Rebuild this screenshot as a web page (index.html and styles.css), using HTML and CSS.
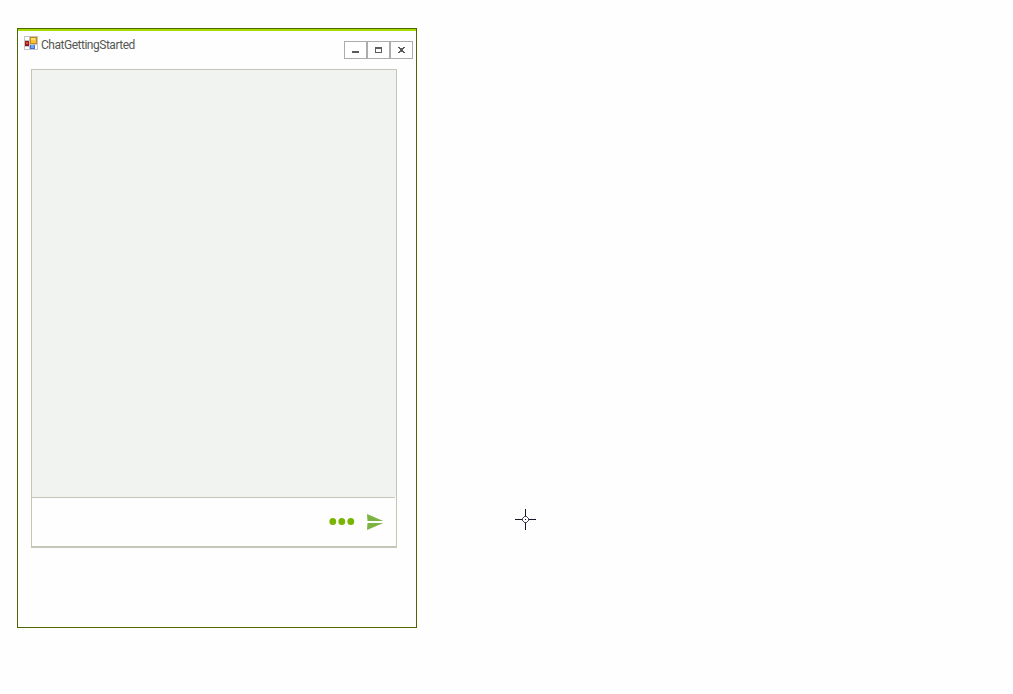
FILE: index.html
```html
<!DOCTYPE html>
<html lang="en">
<head>
<meta charset="utf-8">
<title>ChatGettingStarted</title>
<link rel="stylesheet" href="styles.css">
</head>
<body>
<main class="window">
  <header class="titlebar">
    <svg class="app-icon" width="14" height="14" viewBox="0 0 14 14" shape-rendering="crispEdges">
      <path d="M0 0h14v14H0z" fill="#c3c3c8"/>
      <path d="M1 1h4v3H1zM1 11h4v2H1zM6 1h7v7H6zM6 9h7v4H6z" fill="#fff"/>
      <rect x="1" y="5" width="4" height="5" fill="#a31616"/>
      <rect x="2" y="6" width="2" height="2" fill="#d8503f"/>
      <rect x="6" y="1" width="7" height="7" fill="#c28b12"/>
      <rect x="7" y="2" width="5" height="5" fill="#f8c53a"/>
      <rect x="7" y="2" width="4" height="2" fill="#ffe07c"/>
      <rect x="6" y="9" width="5" height="4" fill="#3f72d2"/>
      <rect x="7" y="9" width="3" height="3" fill="#72a5f5"/>
    </svg>
    <h1 class="title">ChatGettingStarted</h1>
    <div class="controls">
      <button class="control" aria-label="Minimize"><svg width="21" height="16" shape-rendering="crispEdges"><path d="M7 9h7v2H7z" fill="#5b5e59"/></svg></button>
      <button class="control" aria-label="Maximize"><svg width="21" height="16" shape-rendering="crispEdges"><path d="M7 5h7v6H7zM8 7v3h5V7z" fill="#5b5e59" fill-rule="evenodd"/></svg></button>
      <button class="control" aria-label="Close"><svg width="21" height="16" shape-rendering="crispEdges"><path d="M7 5h2v1h3V5h2v1h-1v1h-1v2h1v1h1v1h-2v-1H9v1H7v-1h1V9h1V7H8V6H7z" fill="#5b5e59"/><path d="M10 5h1v1h-1zM10 10h1v1h-1z" fill="#fff"/></svg></button>
    </div>
  </header>
  <section class="chat">
    <div class="messages"></div>
    <div class="composer">
      <svg class="more" width="27" height="10" viewBox="0 0 27 10"><g fill="#78b400"><ellipse cx="3.8" cy="4.5" rx="3.4" ry="3.6"/><ellipse cx="12.8" cy="4.5" rx="3.4" ry="3.6"/><ellipse cx="21.8" cy="4.5" rx="3.4" ry="3.6"/></g></svg>
      <svg class="send" width="17" height="16" viewBox="0 0 17 16"><path d="M0 0 16.3 7H.5zM.5 9h15.8L0 16z" fill="#7cb342"/></svg>
    </div>
  </section>
</main>
<svg class="cursor" width="21" height="21" viewBox="0 0 21 21" shape-rendering="crispEdges">
  <path d="M10 0h1v7h-1zM10 14h1v7h-1zM0 10h7v1H0zM14 10h7v1h-7zM10 10h1v1h-1z" fill="#171727"/>
  <path d="M9 7h3v1H9zM9 13h3v1H9zM7 9h1v3H7zM13 9h1v3h-1zM8 8h1v1H8zM12 8h1v1h-1zM8 12h1v1H8zM12 12h1v1h-1z" fill="#4c4c5c"/>
</svg>
</body>
</html>
```
FILE: styles.css
```css
body {
  margin: 0;
  min-height: 694px;
  box-sizing: border-box;
  padding: 28px 0 0 17px;
  overflow: hidden;
  background: #fefefe;
  font-family: Roboto, "Liberation Sans", Arial, sans-serif;
}

.window {
  display: flex;
  flex-direction: column;
  box-sizing: border-box;
  width: 400px;
  height: 600px;
  border: 1px solid #4f6600;
  background: #fefefe;
}

.titlebar {
  display: flex;
  align-items: flex-start;
  box-sizing: border-box;
  height: 40px;
  padding: 5px 3px 0 6px;
  border-top: 2px solid #a5dc00;
}

.app-icon {
  display: block;
  flex-shrink: 0;
}

.title {
  margin: 1px 0 0 3px;
  color: #555753;
  font-size: 12px;
  font-weight: 400;
  line-height: 16px;
  letter-spacing: -0.48px;
  white-space: nowrap;
}

.controls {
  display: flex;
  margin: 5px 0 0 auto;
}

.control {
  box-sizing: border-box;
  width: 23px;
  height: 18px;
  padding: 0;
  border: 1px solid #acacac;
  background: #fff;
}

.control svg {
  display: block;
}

.chat {
  display: flex;
  flex-direction: column;
  box-sizing: border-box;
  width: 366px;
  height: 479px;
  margin-left: 13px;
  border: 1px solid #c6c6b8;
  border-bottom-width: 2px;
}

.messages {
  flex: 1;
  background: #f0f3ef;
}

.composer {
  display: flex;
  align-items: center;
  justify-content: flex-end;
  gap: 11px;
  box-sizing: border-box;
  height: 49px;
  margin-right: 1px;
  padding-right: 11px;
  border-top: 1px solid #c6c6b8;
}

.cursor {
  position: absolute;
  left: 515px;
  top: 509px;
}
```
